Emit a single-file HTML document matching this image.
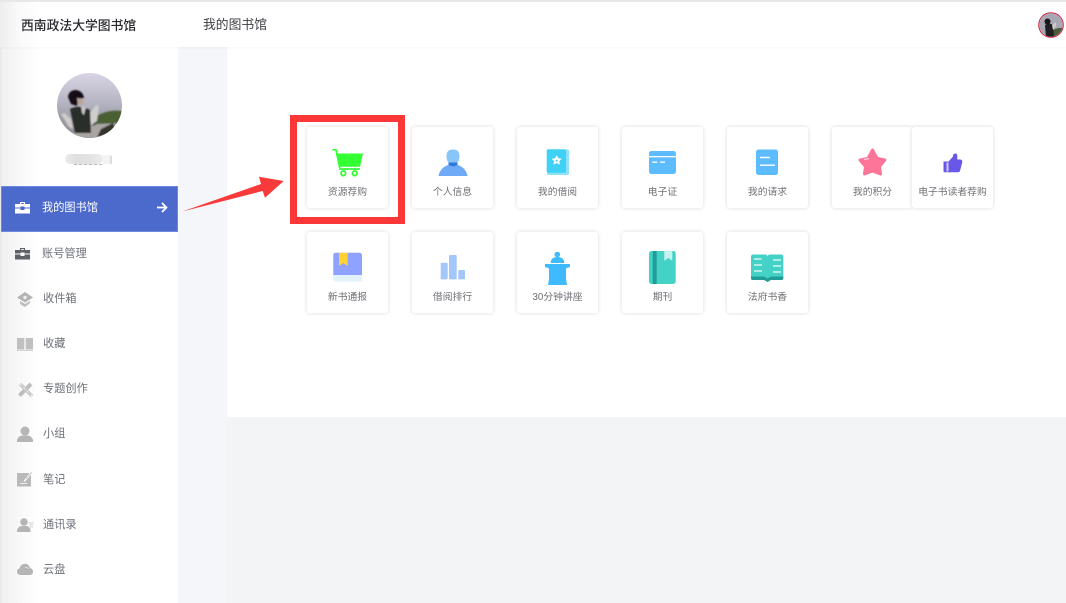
<!DOCTYPE html>
<html lang="zh"><head><meta charset="utf-8"><title>我的图书馆</title>
<style>
html,body{margin:0;padding:0;width:1066px;height:603px;overflow:hidden;background:#fff;font-family:"Liberation Sans","Noto Sans CJK SC",sans-serif}
#p{position:relative;width:1066px;height:603px;overflow:hidden;filter:blur(.3px)}
.a{position:absolute}
.card{position:absolute;width:81px;height:81px;background:#fff;border-radius:3px;box-shadow:0 0 4px rgba(0,0,0,.15)}
.card span{position:absolute;left:-10px;right:-10px;top:58.500px;text-align:center;font-size:9.800px;line-height:14px;color:#6f6f76;white-space:nowrap}
.card svg{position:absolute;left:0;top:0}
.m{position:absolute;font-size:11.200px;line-height:16px;color:#6d7078;white-space:nowrap}
.i{position:absolute}
</style></head><body><div id="p">
<div class="a" style="left:178px;top:47px;width:49px;height:556px;background:#f5f6f9"></div>
<div class="a" style="left:227px;top:417px;width:839px;height:186px;background:#f3f4f6"></div>
<div class="a" style="left:0;top:47px;width:178px;height:556px;background:linear-gradient(90deg,#e4e4e4 0,#f1f1f1 2px,#fafafa 25px,#fff 40px)"></div>
<div class="a" style="left:0;top:0;width:1066px;height:47px;background:linear-gradient(90deg,#eee 0,#fafafa 20px,#fff 40px);border-top:2px solid #e8e8e8;box-sizing:border-box;box-shadow:0 1px 3px rgba(0,0,0,.04)"></div>
<div class="a" style="left:21px;top:16.500px;font-size:12.800px;line-height:18px;font-weight:500;color:#27292e;white-space:nowrap">西南政法大学图书馆</div>
<div class="a" style="left:203px;top:15px;font-size:12.800px;line-height:19px;color:#3a3c42;white-space:nowrap">我的图书馆</div>

<svg class="a" style="left:1038px;top:12px" width="26" height="26" viewBox="0 0 26 26"><defs><clipPath id="c1"><circle cx="13" cy="13" r="11.600"/></clipPath></defs><circle cx="13" cy="13" r="12.800" fill="#c9243f"/><circle cx="13" cy="13" r="11.800" fill="#eee"/><g clip-path="url(#c1)"><rect width="26" height="26" fill="#a9a7b4"/><path d="M12 20Q18 15 26 16V26H12Z" fill="#4a5a3c"/><path d="M0 22L12 24V26H0Z" fill="#666"/><path d="M7 13q4-3 8 0l1 13H8Z" fill="#1f2022"/><circle cx="9.500" cy="9.500" r="3" fill="#17171a"/><path d="M14 13L18 10L18 14L15 18Z" fill="#cfcbc9"/></g></svg>

<svg class="a" style="left:57px;top:73px" width="65" height="65" viewBox="0 0 65 65"><defs><clipPath id="c2"><circle cx="32.500" cy="32.500" r="32.500"/></clipPath><linearGradient id="sky" x1="0" y1="0" x2="0" y2="1"><stop offset="0" stop-color="#d9d4e3"/><stop offset=".45" stop-color="#b6b5c4"/><stop offset=".7" stop-color="#9c9da8"/><stop offset="1" stop-color="#8d8e92"/></linearGradient><filter id="bl" x="-10%" y="-10%" width="120%" height="120%"><feGaussianBlur stdDeviation=".7"/></filter></defs><g clip-path="url(#c2)"><rect width="65" height="65" fill="url(#sky)"/><g filter="url(#bl)"><path d="M36 46Q48 36 65 38V56H36Z" fill="#4c5e36"/><path d="M0 64L26 58L40 51L65 50V65H0Z" fill="#a8a5a3"/><path d="M44 56L56 50L60 60L40 64Z" fill="#35342f"/><path d="M4 41L8 40L14 46L16 56L12 54Z" fill="#cfcbc9"/><path d="M33 40L39 32L42 33L40 48L34 52Z" fill="#cfcdce"/><path d="M13 36Q22 31 33 37L34 60H18Z" fill="#2a2d2b"/><path d="M24 33L29 34L27 42L25 40Z" fill="#c9c3c3"/><path d="M11 24Q12 17 19 17 26 18 27 25L22 26L20 33L14 31Z" fill="#121115"/><path d="M20 25L27 26L26 31L21 33Z" fill="#b9a49a"/></g></g></svg>

<div class="a" style="left:65px;top:154px;width:38px;height:10px;border-radius:5px;background:linear-gradient(90deg,#ececec,#dfdfdf 30%,#e3e3e3 70%,#ececec)"></div>
<div class="a" style="left:103px;top:155px;width:9px;height:9px;background:#f3f3f3"></div>
<div class="a" style="left:110px;top:156px;width:2px;height:8px;background:#ddd"></div>
<div class="a" style="left:74px;top:164px;width:30px;height:1px;background:repeating-linear-gradient(90deg,#bbb 0,#bbb 3px,#eee 3px,#eee 5px)"></div>

<div class="a" style="left:1px;top:186px;width:177px;height:46px;background:#4c69cc;box-shadow:inset 0 0 0 1px #6f88dc"></div>
<svg class="i" style="left:15px;top:201px" width="15" height="13" viewBox="0 0 15 13"><path d="M5 3V1h5v2h-1.200V2H6.200v1Z M0 3h15v3.500H9.500V5.500h-4v1H0Z M0 7.500h5.500V9h4V7.500H15V12.500H0Z" fill="#fff"/></svg>
<div class="m" style="left:42px;top:200px;color:#fff">我的图书馆</div>
<svg class="i" style="left:156px;top:201px" width="12" height="13" viewBox="0 0 12 13"><path d="M1 6.500h9M6 2l4.500 4.500L6 11" fill="none" stroke="#fff" stroke-width="1.800"/></svg>

<svg class="i" style="left:15px;top:247px" width="15" height="13" viewBox="0 0 15 13"><path d="M5 3V1h5v2h-1.200V2H6.200v1Z M0 3h15v3.500H9.500V5.500h-4v1H0Z M0 7.500h5.500V9h4V7.500H15V12.500H0Z" fill="#5f6168"/></svg>
<div class="m" style="left:42px;top:246px">账号管理</div>

<svg class="i" style="left:17px;top:292px" width="16" height="15" viewBox="0 0 16 15"><path d="M8 0L16 5.500L8 10.500L0 5.500Z" fill="#b4b4b4"/><path d="M3 9L8 12L13 9V11L8 15L3 12Z" fill="#bcbcbc"/><circle cx="8" cy="5.500" r="1.700" fill="#efefef"/></svg>
<div class="m" style="left:43px;top:291px">收件箱</div>

<svg class="i" style="left:17px;top:337px" width="16" height="14" viewBox="0 0 16 14"><path d="M0 1h7.300v11.500H0Z M8.700 1H16v11.500H8.700Z" fill="#c0c0c0"/><rect y="13" width="16" height="1" fill="#d2d2d2"/></svg>
<div class="m" style="left:43px;top:336px">收藏</div>

<svg class="i" style="left:18px;top:382px" width="16" height="16" viewBox="0 0 16 16"><path d="M1.500 13.500L13 2" stroke="#bdbdbd" stroke-width="4"/><path d="M2 2L14 14" stroke="#c9c9c9" stroke-width="3.500"/><path d="M2 2L14 14" stroke="#fff" stroke-width=".7" stroke-dasharray="2 3"/></svg>
<div class="m" style="left:43px;top:381px">专题创作</div>

<svg class="i" style="left:17px;top:426px" width="16" height="16" viewBox="0 0 16 16"><circle cx="8" cy="5" r="4.500" fill="#b5b5b5"/><path d="M0 16V14Q1 10.500 5 9.500H11Q15 10.500 16 14V16Z" fill="#b5b5b5"/></svg>
<div class="m" style="left:43px;top:426px">小组</div>

<svg class="i" style="left:17px;top:471px" width="16" height="16" viewBox="0 0 16 16"><path d="M0 2h12.500L7 9.500 6.500 11 8 10.500 14 4V15.500H0Z" fill="#b9b9b9"/><path d="M3 12.500h7" stroke="#eee" stroke-width="1"/><path d="M9 8L15 1" stroke="#ccc" stroke-width="1"/></svg>
<div class="m" style="left:43px;top:472px">笔记</div>

<svg class="i" style="left:17px;top:518px" width="17" height="14" viewBox="0 0 17 14"><circle cx="7" cy="4" r="3.800" fill="#b5b5b5"/><path d="M0 14V12Q1 9 4 8H10Q13 9 13.500 12V14Z" fill="#b5b5b5"/><path d="M12 5h5M12 7h4M13 9h3" stroke="#d2d2d2" stroke-width=".9"/></svg>
<div class="m" style="left:43px;top:517px">通讯录</div>

<svg class="i" style="left:17px;top:563px" width="16" height="12" viewBox="0 0 16 12"><path d="M3.500 12Q0 11.500 0 8.500 0 6 2.500 5.500 3.500 1 8 .7 12 .7 13 5 16 5.800 16 8.700 16 11.500 13 12Z" fill="#b5b5b5"/><path d="M8 4.500Q10.500 4 11.500 6" stroke="#e6e6e6" fill="none" stroke-width=".8"/></svg>
<div class="m" style="left:43px;top:562px">云盘</div>

<svg class="a" style="left:180px;top:172px" width="112" height="44" viewBox="0 0 112 44"><path d="M2.300 39.500L81 12L79 4.700L103.700 9L85 25.700L82.700 19Z" fill="#f93a3a"/></svg>
<div class="a" style="left:290px;top:115px;width:115px;height:109px;box-sizing:border-box;border:7px solid #fb3737"></div>

<div class="card" style="left:307px;top:127px"><svg width="81" height="81" viewBox="0 0 81 81"><path d="M25.500 22.800h3.500l4 19.200h20" fill="none" stroke="#33ff33" stroke-width="1.700"/><path d="M29 26.500H56L53 39.700H32Z" fill="#33ff33"/><circle cx="36.300" cy="46.300" r="2.300" fill="none" stroke="#33ff33" stroke-width="1.800"/><circle cx="47.700" cy="46.300" r="2.300" fill="none" stroke="#33ff33" stroke-width="1.800"/></svg><span>资源荐购</span></div>

<div class="card" style="left:412px;top:127px"><svg width="81" height="81" viewBox="0 0 81 81"><path d="M26.500 49Q28 41 36 38H46Q54 41 55.500 49Z" fill="#6eaaf5"/><path d="M34.500 29Q34.500 22.500 41 22.500 47.500 22.500 47.500 29 47.500 34 45 36H37Q34.500 34 34.500 29Z" fill="#88c6fa"/><path d="M36.500 35.500H45.500V38L41 39.500 36.500 38Z" fill="#2f78d6"/></svg><span>个人信息</span></div>

<div class="card" style="left:517px;top:127px"><svg width="81" height="81" viewBox="0 0 81 81"><rect x="30" y="22.500" width="22" height="25.500" rx="1.500" fill="#8ee2f8"/><rect x="29.700" y="22.300" width="19.300" height="23.500" rx="1.500" fill="#3fd2f6"/><path d="M39.700 28.300l1.700 3 3.300.5-2.400 2.500.6 3.300-3.200-1.500-3.200 1.500.6-3.300-2.400-2.500 3.300-.5Z" fill="#fff"/><circle cx="39.700" cy="33.800" r="1" fill="#3fd2f6"/></svg><span>我的借阅</span></div>

<div class="card" style="left:622px;top:127px"><svg width="81" height="81" viewBox="0 0 81 81"><rect x="27" y="24" width="27" height="23" rx="2.500" fill="#5cbcff"/><rect x="27" y="29" width="27" height="1.300" fill="#fff"/><rect x="30.300" y="34.500" width="5" height="1.300" fill="#fff"/><rect x="38" y="34.500" width="5" height="1.300" fill="#fff"/></svg><span>电子证</span></div>

<div class="card" style="left:727px;top:127px"><svg width="81" height="81" viewBox="0 0 81 81"><rect x="29" y="22.500" width="22" height="25.500" rx="2.500" fill="#5cbcff"/><rect x="33" y="29.800" width="10" height="1.400" fill="#fff"/><rect x="33" y="37.500" width="15" height="1.400" fill="#fff"/></svg><span>我的请求</span></div>

<div class="card" style="left:832px;top:127px"><svg width="81" height="81" viewBox="0 0 81 81"><path d="M40.500 23L45 31.200L52.800 33L47.500 39.500L48.500 47L40.500 44L32.500 47L33.500 39.500L28 33L36 31.200Z" fill="#fd7599" stroke="#fd7599" stroke-width="3" stroke-linejoin="round"/><path d="M32 32.500L37 31.500" stroke="#fdc4d4" stroke-width="1.500"/></svg><span>我的积分</span></div>

<div class="card" style="left:912px;top:127px"><svg width="81" height="81" viewBox="0 0 81 81"><path d="M31.500 34.500H38V45.300H33Q31.500 45.300 31.500 44Z" fill="#6857e8"/><path d="M37 34L41 29.500Q41 26.500 43 26.500 45.300 26.500 45.300 29V32.500H48.500Q50.500 33 50.300 35L48 44Q47.500 45.300 46 45.300H37Z" fill="#6857e8"/><rect x="34.500" y="35.500" width="2" height="9" fill="#cfc9f8"/></svg><span>电子书读者荐购</span></div>

<div class="card" style="left:307px;top:232px"><svg width="81" height="81" viewBox="0 0 81 81"><path d="M26.300 23Q26.300 20.700 28.500 20.700H52Q55 20.700 55 23.500V44H26.300Z" fill="#8fa2ff"/><path d="M26.300 43H55V49.700H29Q26.300 49.700 26.300 47Z" fill="#e3f3fd"/><path d="M32 20.700H40.700V34L36.300 31L32 34Z" fill="#ffd231"/></svg><span>新书通报</span></div>

<div class="card" style="left:412px;top:232px"><svg width="81" height="81" viewBox="0 0 81 81"><rect x="28.700" y="30.700" width="7" height="16.700" rx="1" fill="#a3c7fa"/><rect x="37" y="23" width="7.700" height="24.400" rx="1" fill="#a3c7fa"/><rect x="46.300" y="38" width="6.700" height="9.400" rx="1" fill="#a3c7fa"/></svg><span>借阅排行</span></div>

<div class="card" style="left:517px;top:232px"><svg width="81" height="81" viewBox="0 0 81 81"><circle cx="40.300" cy="22.500" r="2.800" fill="#3fbaff"/><path d="M33.700 31Q33.700 25 40.300 25 47 25 47.300 31Z" fill="#3fbaff"/><path d="M28 32H53V35L49 36.300L49 47L50 53H31L32 47L32 36.300L28 35Z" fill="#3fbaff"/></svg><span>30分钟讲座</span></div>

<div class="card" style="left:622px;top:232px"><svg width="81" height="81" viewBox="0 0 81 81"><rect x="27" y="19" width="26.700" height="33" rx="2.500" fill="#45d2c6"/><rect x="30.700" y="19" width="4" height="33" fill="#1f9d96"/><path d="M42.300 19H50.300V28.700L46.300 26 42.300 28.700Z" fill="#c6f3ee"/></svg><span>期刊</span></div>

<div class="card" style="left:727px;top:232px"><svg width="81" height="81" viewBox="0 0 81 81"><path d="M24 25Q24 22.500 26 22.500H38Q40 22.500 40.500 24.500 41 22.500 43 22.500H54Q56.300 22.500 56.300 25V46H44L40.500 48 37 46H24Z" fill="#45d2c6"/><path d="M24 44.500H37L40.500 46.500 44 44.500H56.300V46.500Q56.300 48 54 48H44L40.500 50 37 48H26Q24 48 24 46.500Z" fill="#1f9d96"/><path d="M27 27h7.500M27 33h8M27 39h8M46 28h8M46 34h8M46 40h8" stroke="#d2f5f1" stroke-width="1.500"/></svg><span>法府书香</span></div>
</div></body></html>
